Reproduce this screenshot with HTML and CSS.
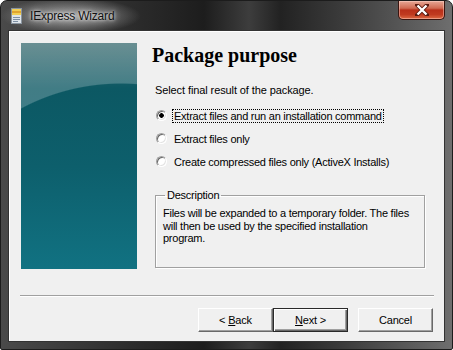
FILE: index.html
```html
<!DOCTYPE html>
<html lang="en">
<head>
    <meta charset="UTF-8">
    <title>IExpress Wizard</title>
    <link rel="stylesheet" href="styles.css">
</head>
<body>
    <div class="window">
        <div class="title-bar">
            <svg class="app-icon" width="11" height="16" viewBox="0 0 11 16">
                <rect x="0.5" y="0.5" width="10" height="15" fill="#dfe5ea" stroke="#8a95a0"/>
                <rect x="1" y="1" width="9" height="6" fill="#f2cf55"/>
                <rect x="1" y="3" width="9" height="2" fill="#e0a530"/>
                <rect x="2" y="9" width="7" height="1" fill="#7d8fa3"/>
                <rect x="2" y="11" width="7" height="1" fill="#7d8fa3"/>
                <rect x="2" y="13" width="5" height="1" fill="#7d8fa3"/>
            </svg>
            <span class="title-text">IExpress Wizard</span>
            <div class="close-btn">
                <svg width="14" height="12" viewBox="0 0 14 12">
                    <path d="M2 1 L12 11 M12 1 L2 11" stroke="#5a1a10" stroke-width="4" stroke-linecap="square"/>
                    <path d="M2.5 1.5 L11.5 10.5 M11.5 1.5 L2.5 10.5" stroke="#fff" stroke-width="2.4"/>
                </svg>
            </div>
        </div>

        <div class="client">
            <div class="main">
                <div class="side-panel"></div>

                <div class="content">
                    <h1>Package purpose</h1>
                    <div class="prompt">Select final result of the package.</div>

                    <div class="options">
                        <div class="option">
                            <span class="radio checked"></span>
                            <span class="option-label focused">Extract files and run an installation command</span>
                        </div>
                        <div class="option">
                            <span class="radio"></span>
                            <span class="option-label">Extract files only</span>
                        </div>
                        <div class="option">
                            <span class="radio"></span>
                            <span class="option-label">Create compressed files only (ActiveX Installs)</span>
                        </div>
                    </div>

                    <fieldset class="description">
                        <legend>Description</legend>
                        <p>Files will be expanded to a temporary folder. The files<br>will then be used by the specified installation<br>program.</p>
                    </fieldset>
                </div>
            </div>

            <div class="separator"></div>

            <div class="buttons">
                <button class="btn">&lt; <u>B</u>ack</button>
                <button class="btn default"><u>N</u>ext &gt;</button>
                <button class="btn cancel">Cancel</button>
            </div>
        </div>
    </div>
</body>
</html>
```

FILE: styles.css
```css
body {
    margin: 0;
    background: #fff;
    font-family: 'Liberation Sans', Arial, sans-serif;
}
.window {
    width: 453px;
    height: 350px;
    box-sizing: border-box;
    border: 1px solid #1c1c1c;
    border-radius: 7px 7px 2px 2px;
    padding: 0 7px 7px;
    display: flex;
    flex-direction: column;
    background:
        radial-gradient(70px 18px at 70px 15px, rgba(200,200,200,0.75), rgba(160,160,160,0) 100%),
        linear-gradient(90deg, #4a4a4a 0%, #2b2b2b 30%, #1d1d1d 45%, #3d3d3d 55%, #222 62%, #3a3a3a 75%, #6e6e6e 100%);
}
.title-bar {
    height: 29px;
    display: flex;
    align-items: center;
}
.app-icon {
    margin-left: 3px;
    margin-top: 1px;
}
.title-text {
    margin-left: 8px;
    font-size: 12px;
    letter-spacing: -0.2px;
    color: #111;
    text-shadow: 0 0 6px rgba(255,255,255,0.9), 0 0 3px rgba(255,255,255,0.8);
}
.close-btn {
    margin-left: auto;
    align-self: flex-start;
    width: 47px;
    height: 19px;
    box-sizing: border-box;
    border: 1px solid #3a1510;
    border-top: none;
    border-radius: 0 0 5px 5px;
    background: linear-gradient(#e7a796 0%, #d06a52 40%, #b9301a 50%, #c03a20 75%, #dd6a44 100%);
    box-shadow: inset 0 0 0 1px rgba(255,220,210,0.45);
    display: flex;
    align-items: center;
    justify-content: center;
}
.client {
    flex: 1;
    box-sizing: border-box;
    background: #f0f0f0;
    border: 1px solid #333;
    box-shadow: inset 1px 1px 0 #fff;
    padding: 12px 11px 0 12px;
    display: flex;
    flex-direction: column;
}
.main {
    display: flex;
    gap: 15px;
    height: 226px;
}
.side-panel {
    width: 116px;
    height: 226px;
    background:
        radial-gradient(200px 186px at 100px 226px, rgba(255,255,255,0) 99.4%, rgba(255,255,255,0.22) 100%),
        linear-gradient(#3f6f74 0%, #0c5863 20%, #0d5f6c 55%, #117282 100%);
}
.content {
    flex: 1;
    font-size: 11px;
    letter-spacing: -0.25px;
    color: #000;
}
.content h1 {
    margin: 0;
    font-family: 'Liberation Serif', 'Times New Roman', serif;
    font-size: 20px;
    letter-spacing: 0;
    line-height: 24px;
    font-weight: bold;
}
.prompt {
    margin-top: 16px;
    margin-left: 3px;
    line-height: 14px;
    letter-spacing: -0.1px;
}
.options {
    margin-top: 7px;
}
.option {
    height: 23px;
    display: flex;
    align-items: center;
    margin-left: 4px;
}
.radio {
    width: 11px;
    height: 11px;
    box-sizing: border-box;
    border-radius: 50%;
    border: 1px solid;
    border-color: #a0a0a0 #fff #fff #a0a0a0;
    box-shadow: inset 1px 1px 0 #696969, inset -1px -1px 0 #e3e3e3;
    background: #fff;
}
.radio.checked {
    background: radial-gradient(circle at 50% 50%, #000 2px, #fff 2.6px);
}
.option-label {
    margin-left: 5px;
    padding: 0 1px;
    line-height: 12px;
    border: 1px solid transparent;
}
.option-label.focused {
    border: 1px dotted #000;
}
.description {
    margin: 15px 0 0 3px;
    width: 270px;
    height: 80px;
    box-sizing: border-box;
    border: 1px solid #a0a0a0;
    box-shadow: 1px 1px 0 #fff, inset 1px 1px 0 #fff;
    padding: 0 7px;
}
.description legend {
    padding: 0 2px;
    margin-left: 2px;
    line-height: 14px;
}
.description p {
    margin: 5px 0 0;
    line-height: 12.5px;
}
.separator {
    margin: 26px -1px 0;
    height: 1px;
    background: #a0a0a0;
    border-bottom: 1px solid #fff;
}
.buttons {
    margin-top: 11px;
    display: flex;
    justify-content: flex-end;
}
.btn {
    width: 75px;
    height: 24px;
    box-sizing: border-box;
    font-family: 'Liberation Sans', Arial, sans-serif;
    font-size: 11px;
    letter-spacing: -0.2px;
    color: #000;
    background: #f0f0f0;
    border: 1px solid;
    border-color: #fff #696969 #696969 #fff;
    box-shadow: inset -1px -1px 0 #a0a0a0;
    padding: 0;
}
.btn.default {
    border: 1px solid #2a2a2a;
    box-shadow: inset 1px 1px 0 #fff, inset -1px -1px 0 #696969, inset -2px -2px 0 #a0a0a0;
}
.btn.cancel {
    margin-left: 10px;
}
```
